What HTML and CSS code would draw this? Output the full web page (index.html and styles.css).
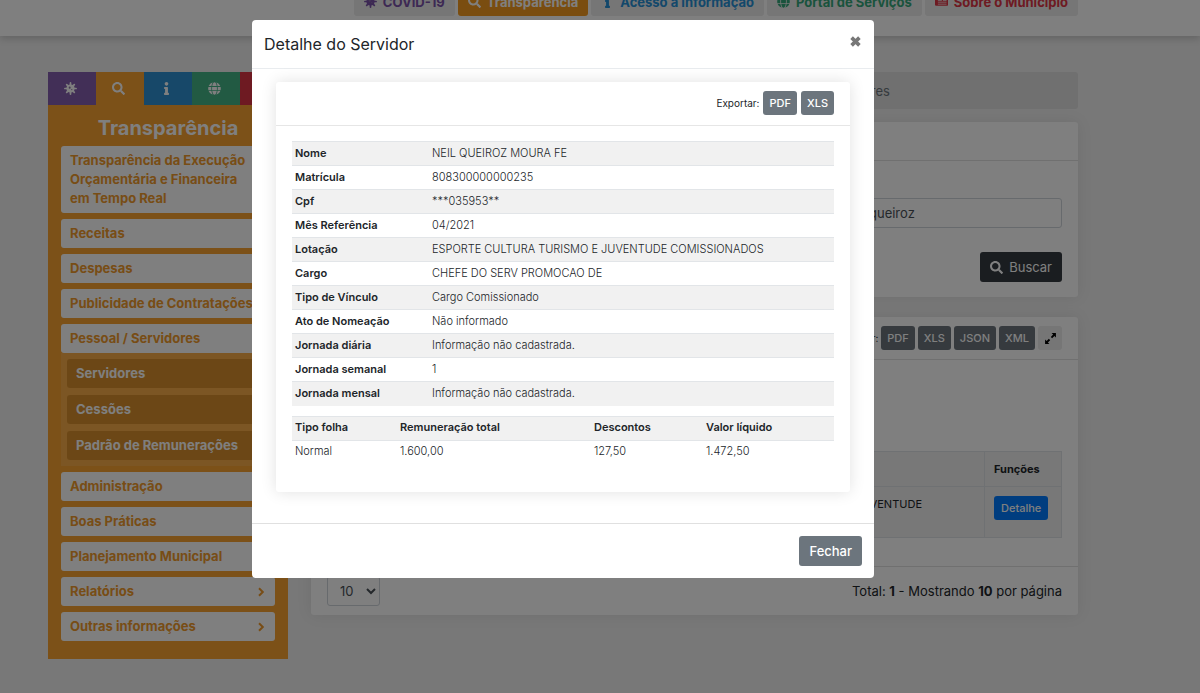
FILE: index.html
```html
<!DOCTYPE html>
<html lang="pt-BR">
<head>
<meta charset="utf-8">
<title>Detalhe do Servidor</title>
<link rel="stylesheet" href="styles.css">
</head>
<body>
<svg class="sprite" aria-hidden="true">
  <symbol id="i-search" viewBox="0 0 512 512"><path d="M505 442.7L405.3 343c-4.5-4.5-10.6-7-17-7H372c27.6-35.3 44-79.7 44-128C416 93.1 322.9 0 208 0S0 93.1 0 208s93.100 208 208 208c48.300 0 92.700-16.400 128-44v16.300c0 6.400 2.500 12.500 7 17l99.700 99.700c9.400 9.400 24.600 9.400 33.900 0l28.300-28.300c9.400-9.400 9.400-24.600.1-34zM208 336c-70.700 0-128-57.200-128-128 0-70.700 57.200-128 128-128 70.700 0 128 57.200 128 128 0 70.700-57.200 128-128 128z"/></symbol>
  <symbol id="i-info" viewBox="-160 0 512 512"><path d="M20 424.229h20V279.771H20c-11.046 0-20-8.954-20-20V212c0-11.046 8.954-20 20-20h112c11.046 0 20 8.954 20 20v212.229h20c11.046 0 20 8.954 20 20V492c0 11.046-8.954 20-20 20H20c-11.046 0-20-8.954-20-20v-47.771c0-11.046 8.954-20 20-20zM96 0C56.235 0 24 32.235 24 72s32.235 72 72 72 72-32.235 72-72S135.764 0 96 0z"/></symbol>
  <symbol id="i-globe" viewBox="-8 0 512 512"><path d="M336.5 160C322 70.700 287.800 8 248 8s-74 62.700-88.500 152h177zM152 256c0 22.200 1.200 43.500 3.300 64h185.300c2.100-20.500 3.300-41.800 3.300-64s-1.200-43.500-3.300-64H155.300c-2.100 20.500-3.300 41.800-3.300 64zm324.700-96c-28.600-67.900-86.500-120.400-158-141.600 24.400 33.800 41.200 84.700 50 141.600h108zM177.200 18.400C105.800 39.600 47.800 92.100 19.300 160h108c8.700-56.900 25.500-107.800 49.900-141.600zM487.400 192H372.700c2.100 21 3.300 42.500 3.300 64s-1.200 43-3.300 64h114.600c5.500-20.500 8.600-41.800 8.600-64s-3.100-43.500-8.500-64zM120 256c0-21.500 1.200-43 3.300-64H8.600C3.200 212.500 0 233.800 0 256s3.200 43.500 8.600 64h114.600c-2-21-3.200-42.500-3.200-64zm39.500 96c14.500 89.300 48.700 152 88.500 152s74-62.700 88.500-152h-177zm159.300 141.600c71.400-21.200 129.400-73.700 158-141.600h-108c-8.800 56.900-25.600 107.800-50 141.600zM19.300 352c28.600 67.900 86.500 120.400 158 141.600-24.400-33.800-41.200-84.700-50-141.600h-108z"/></symbol>
  <symbol id="i-virus" viewBox="0 0 512 512">
    <path d="M256 36v440M36 256h440M106 106l300 300M406 106L106 406" fill="none" stroke="currentColor" stroke-width="68" stroke-linecap="round"/>
    <path d="M256 96a160 160 0 1 0 0 320 160 160 0 1 0 0-320z"/>
    <g class="virus-holes"><circle cx="224" cy="222" r="40"/><circle cx="306" cy="300" r="26"/></g>
  </symbol>
  <symbol id="i-news" viewBox="0 0 576 512"><path fill-rule="evenodd" d="M96 64h448q32 0 32 32v320q0 32-32 32H48q-48 0-48-48V112q0-16 16-16h48q0-32 32-32zM128 128v96h176v-96zM352 128v32h160v-32zM352 192v32h160v-32zM128 272v32h384v-32zM128 352v32h384v-32z"/></symbol>
  <symbol id="i-expand" viewBox="0 0 12 12"><path d="M7 1h4v4L9.600 3.600 7.500 5.700 6.300 4.500 8.400 2.400zM5 11H1V7l1.400 1.400 2.100-2.100 1.200 1.200-2.100 2.100z"/></symbol>
  <symbol id="i-chevron" viewBox="0 0 10 10"><path d="M3 1.200L6.800 5 3 8.800" fill="none" stroke="currentColor" stroke-width="2"/></symbol>
  <symbol id="i-close" viewBox="0 0 10 10"><path d="M2 2l6 6M8 2L2 8" fill="none" stroke="currentColor" stroke-width="2.800"/></symbol>
</svg>

<header class="topbar">
  <nav class="topnav" aria-label="Principal">
    <a class="purple" href="#"><svg class="icon"><use href="#i-virus"/></svg>COVID-19</a>
    <a class="active" href="#"><svg class="icon"><use href="#i-search"/></svg>Transparência</a>
    <a class="blue" href="#"><svg class="icon"><use href="#i-info"/></svg>Acesso à Informação</a>
    <a class="green" href="#"><svg class="icon"><use href="#i-globe"/></svg>Portal de Serviços</a>
    <a class="red" href="#"><svg class="icon"><use href="#i-news"/></svg>Sobre o Município</a>
  </nav>
</header>

<div class="layout">
  <aside class="sidebar">
    <nav class="tabs" aria-label="Seções">
      <a class="bg-purple" href="#" aria-label="COVID-19"><svg class="icon"><use href="#i-virus"/></svg></a>
      <a class="bg-orange" href="#" aria-label="Transparência"><svg class="icon"><use href="#i-search"/></svg></a>
      <a class="bg-blue" href="#" aria-label="Acesso à Informação"><svg class="icon"><use href="#i-info"/></svg></a>
      <a class="bg-green" href="#" aria-label="Portal de Serviços"><svg class="icon"><use href="#i-globe"/></svg></a>
      <a class="bg-red" href="#" aria-label="Sobre o Município"><svg class="icon"><use href="#i-news"/></svg></a>
    </nav>
    <h2 class="sidebar-title">Transparência</h2>
    <ul class="menu">
      <li><a class="long" href="#">Transparência da Execução Orçamentária e Financeira em Tempo Real</a></li>
      <li><a href="#">Receitas</a></li>
      <li><a href="#">Despesas</a></li>
      <li><a class="single" href="#">Publicidade de Contratações</a></li>
      <li>
        <a href="#">Pessoal / Servidores</a>
        <ul class="submenu">
          <li><a href="#">Servidores</a></li>
          <li><a href="#">Cessões</a></li>
          <li><a class="single" href="#">Padrão de Remunerações</a></li>
        </ul>
      </li>
      <li><a href="#">Administração</a></li>
      <li><a href="#">Boas Práticas</a></li>
      <li><a href="#">Planejamento Municipal</a></li>
      <li><a href="#">Relatórios<svg class="chevron"><use href="#i-chevron"/></svg></a></li>
      <li><a href="#">Outras informações<svg class="chevron"><use href="#i-chevron"/></svg></a></li>
    </ul>
  </aside>

  <main class="content">
    <div class="breadcrumb">Servidores</div>
    <section class="card">
      <div class="card-head"></div>
      <form class="search">
        <input class="field" type="text" aria-label="Nome" value="queiroz">
        <button class="btn dark" type="button"><svg class="icon"><use href="#i-search"/></svg>Buscar</button>
      </form>
    </section>
    <section class="card">
      <div class="card-head tools">
        <span>Exportar:</span>
        <button class="btn small" type="button">PDF</button>
        <button class="btn small" type="button">XLS</button>
        <button class="btn small" type="button">JSON</button>
        <button class="btn small" type="button">XML</button>
        <button class="btn small light" type="button" aria-label="Expandir"><svg class="icon"><use href="#i-expand"/></svg></button>
      </div>
      <div class="results-wrap">
        <table class="results">
          <thead><tr><th>Lotação</th><th class="actions">Funções</th></tr></thead>
          <tbody><tr><td>JUVENTUDE</td><td class="actions"><button class="btn small primary" type="button">Detalhe</button></td></tr></tbody>
        </table>
      </div>
      <div class="card-foot">
        <select class="page-size" aria-label="Itens por página"><option>10</option></select>
        <p class="total">Total: <b>1</b> - Mostrando <b>10</b> por página</p>
      </div>
    </section>
  </main>
</div>

<div class="overlay">
  <div class="modal" role="dialog" aria-modal="true" aria-labelledby="modal-title">
    <div class="modal-head">
      <h1 class="modal-title" id="modal-title">Detalhe do Servidor</h1>
      <button class="close" type="button" aria-label="Fechar janela"><svg class="icon"><use href="#i-close"/></svg></button>
    </div>
    <div class="modal-body">
      <div class="detail-card">
        <div class="detail-head tools">
          <span>Exportar:</span>
          <button class="btn small" type="button">PDF</button>
          <button class="btn small" type="button">XLS</button>
        </div>
        <div class="detail-body">
          <table class="details">
            <tbody>
              <tr><th scope="row">Nome</th><td>NEIL QUEIROZ MOURA FE</td></tr>
              <tr><th scope="row">Matrícula</th><td>808300000000235</td></tr>
              <tr><th scope="row">Cpf</th><td>***035953**</td></tr>
              <tr><th scope="row">Mês Referência</th><td>04/2021</td></tr>
              <tr><th scope="row">Lotação</th><td>ESPORTE CULTURA TURISMO E JUVENTUDE COMISSIONADOS</td></tr>
              <tr><th scope="row">Cargo</th><td>CHEFE DO SERV PROMOCAO DE</td></tr>
              <tr><th scope="row">Tipo de Vínculo</th><td>Cargo Comissionado</td></tr>
              <tr><th scope="row">Ato de Nomeação</th><td>Não informado</td></tr>
              <tr><th scope="row">Jornada diária</th><td>Informação não cadastrada.</td></tr>
              <tr><th scope="row">Jornada semanal</th><td>1</td></tr>
              <tr><th scope="row">Jornada mensal</th><td>Informação não cadastrada.</td></tr>
            </tbody>
          </table>
          <table class="details pay">
            <thead><tr><th>Tipo folha</th><th>Remuneração total</th><th>Descontos</th><th>Valor líquido</th></tr></thead>
            <tbody><tr><td>Normal</td><td>1.600,00</td><td>127,50</td><td>1.472,50</td></tr></tbody>
          </table>
        </div>
      </div>
    </div>
    <div class="modal-foot"><button class="btn" type="button">Fechar</button></div>
  </div>
</div>
</body>
</html>
```
FILE: styles.css
```css
* { box-sizing: border-box; }
body {
  margin: 0;
  min-height: 100vh;
  background: #f0f0f0;
  color: #212529;
  font: 13px/20px Inter, "Open Sans", sans-serif;
  overflow: hidden;
}
a { text-decoration: none; }
ul { list-style: none; margin: 0; padding: 0; }
button, input, select { font: inherit; color: inherit; }
table { border-collapse: collapse; width: 100%; }
.sprite { position: absolute; width: 0; height: 0; }
.icon { width: 13px; height: 13px; fill: currentColor; flex: none; }
.virus-holes { fill: #8c74a6; }

.topbar {
  display: flex;
  align-items: flex-end;
  justify-content: flex-end;
  height: 36px;
  padding: 0 122px 20px 48px;
  background: #fff;
  box-shadow: 0 2px 8px rgba(0, 0, 0, .2);
}
.topnav { display: flex; gap: 3px; }
.topnav a {
  display: flex;
  align-items: center;
  gap: 6px;
  height: 29px;
  padding: 0 10px;
  border-radius: 3px;
  background: #ececec;
  font-weight: 700;
  white-space: nowrap;
}
.topnav .purple { color: #7a52a8; }
.topnav .active { background: #f59b20; color: #fff; }
.topnav .blue { color: #2790d6; }
.topnav .green { color: #35a77a; }
.topnav .red { color: #dc3545; }

.layout { display: flex; gap: 23px; align-items: flex-start; padding: 36px 122px 33px 48px; }
.sidebar { flex: none; width: 240px; padding-bottom: 18px; background: #f8a230; }
.tabs { display: flex; }
.tabs a { flex: 1; display: flex; align-items: center; justify-content: center; height: 33px; padding-right: 4px; color: #fff; }
.bg-purple { background: #855fae; }
.bg-blue { background: #2f90d2; }
.bg-green { background: #45b487; }
.bg-red { background: #dc3545; }
.sidebar-title { margin: 11px 0 6px; font-size: 20px; line-height: 24px; font-weight: 700; text-align: center; color: #fff; }
.menu { display: flex; flex-direction: column; gap: 6px; padding: 0 13px; font-weight: 700; }
.menu a {
  display: flex;
  align-items: center;
  justify-content: space-between;
  padding: 5px 9px;
  border-radius: 3px;
  background: #fff;
  color: #f09a2c;
  line-height: 19px;
}
.menu .long { padding-right: 20px; }
.menu .single { white-space: nowrap; }
.menu .submenu { display: flex; flex-direction: column; gap: 7px; padding: 6px; background: #f8ac48; }
.menu .submenu a { background: #d98f2c; color: #fff; }
.chevron { width: 10px; height: 10px; }

.content { flex: 1; min-width: 0; }
.breadcrumb { height: 37px; padding: 9px 188px 8px 16px; border-radius: 3px; background: #e0e0e0; color: #6c757d; text-align: right; }
.card { margin-top: 13px; border-radius: 3px; background: #fff; box-shadow: 0 0 16px rgba(0, 0, 0, .08); }
.card + .card { margin-top: 20px; }
.card-head { min-height: 39px; border-bottom: 1px solid #e0e0e0; }
.tools { display: flex; align-items: center; justify-content: flex-end; gap: 4px; padding: 0 16px; font-size: 10px; }
.card-head.tools { min-height: 43px; gap: 3px; }
.search { display: flex; flex-direction: column; align-items: flex-end; gap: 24px; padding: 37px 16px 15px; }
.field { width: 204px; height: 30px; padding: 0 10px; border: 1px solid #ced4da; border-radius: 3px; background: #fff; color: #495057; }
.btn {
  display: inline-flex;
  align-items: center;
  justify-content: center;
  gap: 6px;
  height: 30px;
  padding: 0 10px;
  border: 0;
  border-radius: 3px;
  background: #6c757d;
  color: #fff;
  font-weight: 500;
}
.btn.small { height: 24px; padding: 0 6px; font-size: 11px; }
.btn.dark { background: #343a40; font-weight: 400; }
.btn.light { width: 24px; padding: 0; background: #ececec; color: #000; }
.btn.primary { padding: 0 7px; background: #007bff; }
.results-wrap { padding: 91px 16px 28px; font-size: 11px; }
.results { background: #f0f0f0; }
.results th, .results td { padding: 9px; border: 1px solid #dee2e6; text-align: left; vertical-align: top; line-height: 16px; }
.results td:first-child { padding-right: 62px; text-align: right; }
.results td { height: 51px; }
.results .actions { width: 77px; }
.card-foot { display: flex; align-items: center; justify-content: space-between; padding: 9px 16px; border-top: 1px solid #e0e0e0; }
.page-size { width: 53px; height: 30px; padding: 0 0 0 8px; border: 1px solid #ced4da; border-radius: 3px; background: #fff; color: #495057; }
.total { margin: 0; }

.overlay {
  position: fixed;
  inset: 0;
  display: flex;
  align-items: flex-start;
  justify-content: center;
  padding: 20px 74px 20px 0;
  background: rgba(0, 0, 0, .5);
}
.modal { width: 100%; max-width: 622px; border-radius: 4px; background: #fff; }
.modal-head { display: flex; align-items: center; justify-content: space-between; height: 49px; padding: 0 12px; border-bottom: 1px solid #e9ecef; }
.modal-title { margin: 0; font-size: 16px; line-height: 24px; font-weight: 400; }
.close { display: flex; padding: 0; margin-bottom: 5px; border: 0; background: none; color: #777; }
.modal-body { padding: 13px 24px 31px; }
.detail-card { border-radius: 3px; box-shadow: 0 0 16px rgba(0, 0, 0, .12); }
.detail-head { height: 44px; padding-bottom: 2px; border-bottom: 1px solid #e6e6e6; }
.detail-body { padding: 15px 16px 28px; }
.details { font-size: 11px; line-height: 16px; }
.details th, .details td { height: 24px; padding: 0 3px 2px; border-top: 1px solid #e2e5e8; text-align: left; }
.details th { font-weight: 600; }
.details th:first-child { width: 137px; }
.details td { font-weight: 300; }
.details tbody tr:nth-child(odd) { background: #f1f1f1; }
.pay { margin-top: 10px; table-layout: fixed; }
.pay thead tr { background: #f1f1f1; }
.pay tbody tr:nth-child(odd) { background: none; }
.pay th:first-child { width: 105px; }
.pay th:nth-child(2) { width: 194px; }
.pay th:nth-child(3) { width: 112px; }
.modal-foot { display: flex; justify-content: flex-end; padding: 12px; border-top: 1px solid #e0e0e0; }
```
